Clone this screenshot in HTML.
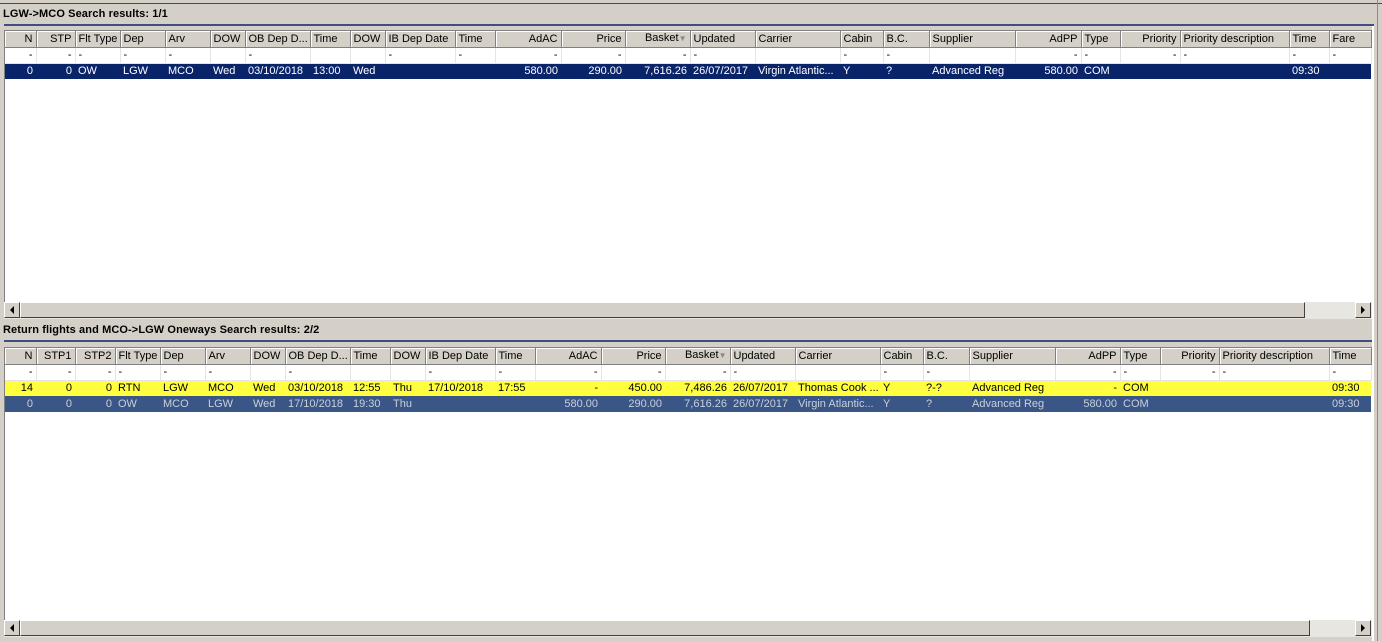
<!DOCTYPE html>
<html><head><meta charset="utf-8"><style>
*{margin:0;padding:0;box-sizing:border-box}
body{width:1382px;height:641px;background:#d4d0c8;font-family:"Liberation Sans",Arial,sans-serif;font-size:11px;position:relative;overflow:hidden;color:#000}
.topline{position:absolute;left:0;top:3px;width:1382px;height:1px;background:#3a4a7a}
.title{position:absolute;left:3px;font-weight:bold;font-size:11px;letter-spacing:0.1px}
.bl{position:absolute;left:4px;width:1370px;height:2px;background:#3c4e82}
.grid{position:absolute;left:4px;width:1368px;background:#fff;border-left:1px solid #808080;border-top:1px solid #808080;overflow:hidden}
table{border-collapse:collapse;table-layout:fixed}
td{height:15px;padding:0 3px;white-space:nowrap;overflow:hidden;line-height:14px}
tr.h td{background:#d4d0c8;border-right:1px solid #808080;border-bottom:1px solid #808080;box-shadow:inset 1px 1px 0 #fff;height:16px}
tr.f td{border-right:1px solid #e4e4e4;border-bottom:1px solid #e4e4e4;height:16px}
tr.s td{background:#0a246a;color:#fff;height:16px}
tr.y td{background:#ffff40;height:16px}
tr.b td{background:#3a5686;color:#c8d0dc;height:16px}
.r{text-align:right}
.sb{position:absolute;left:4px;width:1368px;height:17px;background:#e8e6e0}
.sb .a{position:absolute;top:0;width:16px;height:16px;background:#d4d0c8;border:1px solid;border-color:#fff #404040 #404040 #fff}
.sb .t{position:absolute;top:0;left:16px;height:16px;background:#d4d0c8;border:1px solid;border-color:#fff #404040 #404040 #fff}
.rs{position:absolute;left:1372px;top:26px;width:2px;height:615px;background:#fff}
.rs2{position:absolute;left:1377px;top:0;width:1px;height:641px;background:#7a8ab0}
</style></head><body>
<div class="topline"></div>
<div class="title" style="top:8px">LGW-&gt;MCO Search results: 1/1</div>
<div class="bl" style="top:24px"></div>
<div class="grid" style="top:30px;height:272px">
<table style="width:1366px">
<colgroup><col style="width:31px"><col style="width:39px"><col style="width:45px"><col style="width:45px"><col style="width:45px"><col style="width:35px"><col style="width:65px"><col style="width:40px"><col style="width:35px"><col style="width:70px"><col style="width:40px"><col style="width:66px"><col style="width:64px"><col style="width:65px"><col style="width:65px"><col style="width:85px"><col style="width:43px"><col style="width:46px"><col style="width:86px"><col style="width:66px"><col style="width:39px"><col style="width:60px"><col style="width:109px"><col style="width:40px"><col style="width:42px"></colgroup>
<tr class="h"><td class="r">N</td><td class="r">STP</td><td>Flt Type</td><td>Dep</td><td>Arv</td><td>DOW</td><td>OB Dep D...</td><td>Time</td><td>DOW</td><td>IB Dep Date</td><td>Time</td><td class="r">AdAC</td><td class="r">Price</td><td class="r">Basket<span style="color:#888;font-size:8px">▼</span></td><td>Updated</td><td>Carrier</td><td>Cabin</td><td>B.C.</td><td>Supplier</td><td class="r">AdPP</td><td>Type</td><td class="r">Priority</td><td>Priority description</td><td>Time</td><td>Fare</td></tr>
<tr class="f"><td class="r">-</td><td class="r">-</td><td>-</td><td>-</td><td>-</td><td></td><td>-</td><td></td><td></td><td>-</td><td>-</td><td class="r">-</td><td class="r">-</td><td class="r">-</td><td>-</td><td></td><td>-</td><td>-</td><td></td><td class="r">-</td><td>-</td><td class="r">-</td><td>-</td><td>-</td><td>-</td></tr>
<tr class="s"><td class="r">0</td><td class="r">0</td><td>OW</td><td>LGW</td><td>MCO</td><td>Wed</td><td>03/10/2018</td><td>13:00</td><td>Wed</td><td></td><td></td><td class="r">580.00</td><td class="r">290.00</td><td class="r">7,616.26</td><td>26/07/2017</td><td>Virgin Atlantic...</td><td>Y</td><td>?</td><td>Advanced Reg</td><td class="r">580.00</td><td>COM</td><td></td><td></td><td>09:30</td><td></td></tr>
</table></div>
<div class="sb" style="top:302px"><div class="a" style="left:0">
<svg width="14" height="14" style="position:absolute;left:0;top:0"><path d="M5 7 L9 3 L9 11Z" fill="#000"/></svg></div>
<div class="t" style="width:1285px"></div>
<div class="a" style="left:1351px"><svg width="14" height="14" style="position:absolute;left:0;top:0"><path d="M9 7 L5 3 L5 11Z" fill="#000"/></svg></div></div>

<div class="title" style="top:324px">Return flights and MCO-&gt;LGW Oneways Search results: 2/2</div>
<div class="bl" style="top:340px"></div>
<div class="grid" style="top:347px;height:273px">
<table style="width:1366px">
<colgroup><col style="width:31px"><col style="width:39px"><col style="width:40px"><col style="width:45px"><col style="width:45px"><col style="width:45px"><col style="width:35px"><col style="width:65px"><col style="width:40px"><col style="width:35px"><col style="width:70px"><col style="width:40px"><col style="width:66px"><col style="width:64px"><col style="width:65px"><col style="width:65px"><col style="width:85px"><col style="width:43px"><col style="width:46px"><col style="width:86px"><col style="width:65px"><col style="width:40px"><col style="width:59px"><col style="width:110px"><col style="width:42px"></colgroup>
<tr class="h"><td class="r">N</td><td class="r">STP1</td><td class="r">STP2</td><td>Flt Type</td><td>Dep</td><td>Arv</td><td>DOW</td><td>OB Dep D...</td><td>Time</td><td>DOW</td><td>IB Dep Date</td><td>Time</td><td class="r">AdAC</td><td class="r">Price</td><td class="r">Basket<span style="color:#888;font-size:8px">▼</span></td><td>Updated</td><td>Carrier</td><td>Cabin</td><td>B.C.</td><td>Supplier</td><td class="r">AdPP</td><td>Type</td><td class="r">Priority</td><td>Priority description</td><td>Time</td></tr>
<tr class="f"><td class="r">-</td><td class="r">-</td><td class="r">-</td><td>-</td><td>-</td><td>-</td><td></td><td>-</td><td></td><td></td><td>-</td><td>-</td><td class="r">-</td><td class="r">-</td><td class="r">-</td><td>-</td><td></td><td>-</td><td>-</td><td></td><td class="r">-</td><td>-</td><td class="r">-</td><td>-</td><td>-</td></tr>
<tr class="y"><td class="r">14</td><td class="r">0</td><td class="r">0</td><td>RTN</td><td>LGW</td><td>MCO</td><td>Wed</td><td>03/10/2018</td><td>12:55</td><td>Thu</td><td>17/10/2018</td><td>17:55</td><td class="r">-</td><td class="r">450.00</td><td class="r">7,486.26</td><td>26/07/2017</td><td>Thomas Cook ...</td><td>Y</td><td>?-?</td><td>Advanced Reg</td><td class="r">-</td><td>COM</td><td></td><td></td><td>09:30</td></tr>
<tr class="b"><td class="r">0</td><td class="r">0</td><td class="r">0</td><td>OW</td><td>MCO</td><td>LGW</td><td>Wed</td><td>17/10/2018</td><td>19:30</td><td>Thu</td><td></td><td></td><td class="r">580.00</td><td class="r">290.00</td><td class="r">7,616.26</td><td>26/07/2017</td><td>Virgin Atlantic...</td><td>Y</td><td>?</td><td>Advanced Reg</td><td class="r">580.00</td><td>COM</td><td></td><td></td><td>09:30</td></tr>
</table></div>
<div class="sb" style="top:620px"><div class="a" style="left:0">
<svg width="14" height="14" style="position:absolute;left:0;top:0"><path d="M5 7 L9 3 L9 11Z" fill="#000"/></svg></div>
<div class="t" style="width:1290px"></div>
<div class="a" style="left:1351px"><svg width="14" height="14" style="position:absolute;left:0;top:0"><path d="M9 7 L5 3 L5 11Z" fill="#000"/></svg></div></div>
<div class="rs"></div><div class="rs2"></div>
</body></html>
